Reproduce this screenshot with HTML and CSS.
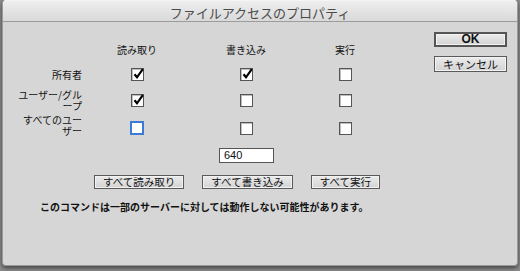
FILE: index.html
```html
<!DOCTYPE html>
<html lang="ja">

<head>
  <meta charset="utf-8">
  <title>ファイルアクセスのプロパティ</title>
  <link rel="stylesheet" href="styles.css">
</head>

<body>
  <div class="dialog">
    <div class="titlebar">ファイルアクセスのプロパティ</div>
    <div class="content">
      <div class="main">
        <div class="perm-grid">
          <span></span>
          <span class="col-head">読み取り</span>
          <span class="col-head">書き込み</span>
          <span class="col-head">実行</span>

          <span class="row-label">所有者</span>
          <span class="check on"><svg viewBox="0 0 13 13"><path d="M2.5 6.2 L5 9.3 L10.8 1.2" /></svg></span>
          <span class="check on"><svg viewBox="0 0 13 13"><path d="M2.5 6.2 L5 9.3 L10.8 1.2" /></svg></span>
          <span class="check"></span>

          <span class="row-label">ユーザー/グループ</span>
          <span class="check on"><svg viewBox="0 0 13 13"><path d="M2.5 6.2 L5 9.3 L10.8 1.2" /></svg></span>
          <span class="check"></span>
          <span class="check"></span>

          <span class="row-label up">すべてのユーザー</span>
          <span class="check focus"></span>
          <span class="check"></span>
          <span class="check"></span>

          <span></span>
          <span></span>
          <span class="octal">640</span>
          <span></span>
        </div>
        <div class="all-buttons">
          <button>すべて読み取り</button>
          <button>すべて書き込み</button>
          <button>すべて実行</button>
        </div>
        <div class="note">このコマンドは一部のサーバーに対しては動作しない可能性があります。</div>
      </div>
      <div class="side">
        <button class="default">OK</button>
        <button>キャンセル</button>
      </div>
    </div>
  </div>
</body>

</html>
```

FILE: styles.css
```css
html, body {
  padding: 0;
  margin: 0;
  width: 100%;
  height: 100%;
  overflow: hidden;
}
body {
  background: #8c8c8c;
  font-family: "Noto Sans CJK JP", "Liberation Sans", sans-serif;
  color: #111;
}
button {
  font-family: inherit;
  cursor: pointer;
}
.dialog {
  margin: 0 2px;
  height: 266px;
  background: #d6d6d6;
  border: 1px solid #9a9a9a;
  border-top: 0;
  border-radius: 4px 4px 4px 4px;
  box-shadow: 0 2px 4px rgba(0, 0, 0, 0.55);
  box-sizing: border-box;
  overflow: hidden;
}
.titlebar {
  height: 22px;
  line-height: 23px;
  text-align: center;
  font-size: 13px;
  color: #4a4a4a;
  background: linear-gradient(#eeeeee, #d9d9d9);
  border-bottom: 1px solid #9c9c9c;
  border-top: 1px solid #f4f4f4;
  box-sizing: border-box;
}
.content {
  display: flex;
  flex-direction: row;
}
.main {
  flex: 1;
  display: flex;
  flex-direction: column;
}
.perm-grid {
  display: grid;
  grid-template-columns: 79px 110px 108px 90px;
  grid-template-rows: 19px 30px 22px 34px 20px;
  align-items: center;
  justify-items: center;
  margin-top: 18px;
}
.col-head {
  font-size: 10px;
  line-height: 12px;
}
.row-label {
  justify-self: end;
  width: 65px;
  text-align: right;
  font-size: 10px;
  line-height: 11px;
  line-break: anywhere;
  word-break: break-all;
}
.row-label.up {
  line-height: 10.5px;
  margin-bottom: 5px;
}
.check {
  width: 13px;
  height: 13px;
  background: #ffffff;
  border: 1px solid #555555;
  box-shadow: inset 1px 1px 0 #bdbdbd;
  box-sizing: border-box;
  position: relative;
}
.check svg {
  position: absolute;
  left: 0;
  top: -1px;
  width: 13px;
  height: 13px;
  fill: none;
  stroke: #000;
  stroke-width: 2.2;
}
.check.focus {
  border: 2px solid #3a7bd5;
  width: 14px;
  height: 14px;
  box-shadow: none;
}
.octal {
  width: 55px;
  height: 15px;
  background: #ffffff;
  border: 1px solid #555555;
  box-sizing: border-box;
  font-family: "Liberation Sans", sans-serif;
  font-size: 11px;
  line-height: 13px;
  padding-left: 4px;
  margin-left: 1px;
}
.all-buttons {
  display: flex;
  flex-direction: row;
  gap: 18px;
  margin-top: 10px;
  margin-left: 91px;
}
.all-buttons button,
.side button {
  height: 14px;
  padding: 0 8px;
  margin: 0;
  font-size: 10.5px;
  line-height: 12px;
  color: #111;
  background: linear-gradient(#ebebeb, #d3d3d3);
  border: 1px solid #5a5a5a;
  box-shadow: inset 0 0 0 1px #f2f2f2;
}
.note {
  margin-top: 12px;
  margin-left: 37px;
  font-size: 10px;
  font-weight: bold;
  line-height: 12px;
  white-space: nowrap;
}
.side {
  width: 73px;
  margin-right: 10px;
  margin-top: 10px;
  display: flex;
  flex-direction: column;
  gap: 9px;
}
.side button {
  height: 16px;
  padding: 0;
  font-size: 11px;
  line-height: 13px;
}
.side button.default {
  height: 15px;
  border: 2px solid #555555;
  font-family: "Liberation Sans", sans-serif;
  font-weight: bold;
  font-size: 12px;
  line-height: 11px;
}
```
